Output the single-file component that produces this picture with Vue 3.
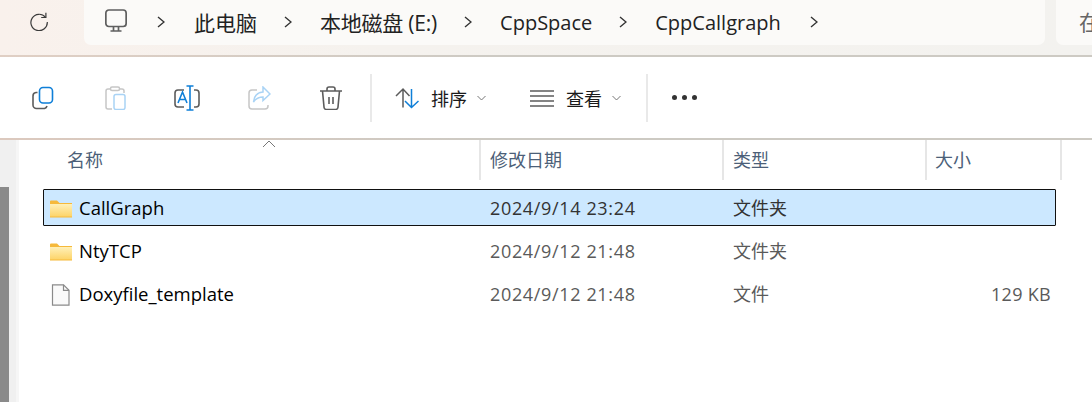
<template>
  <div class="explorer">
    <header class="topbar">
      <button class="refresh">
        <svg width="20" height="20" viewBox="0 0 20 20" fill="none" stroke="#3a3a3a" stroke-width="1.2">
          <path d="M16.4 6.2A8.2 8.2 0 1 0 18.3 11" />
          <path d="M16.9 1.8v4.700h-4.700" />
        </svg>
      </button>
      <nav class="address">
        <svg class="pc" width="24" height="24" viewBox="0 0 24 24" fill="none" stroke="#5f5f5f" stroke-width="1.7">
          <rect x="0.85" y="1" width="20.3" height="16.500" rx="3" />
          <path d="M8.500 18v3.500M13.500 18v3.500M5.500 22h11" />
        </svg>
        <template v-for="crumb in crumbs" :key="crumb.label">
          <svg class="chev" width="8" height="12" viewBox="0 0 8 12" fill="none" stroke="#333" stroke-width="1.4"><path d="M1 1l6 5-6 5" /></svg>
          <span class="crumb" :class="{ cjk: crumb.cjk }">{{ crumb.label }}</span>
        </template>
        <svg class="chev" width="8" height="12" viewBox="0 0 8 12" fill="none" stroke="#333" stroke-width="1.4"><path d="M1 1l6 5-6 5" /></svg>
      </nav>
      <div class="search">在</div>
    </header>

    <div class="toolbar">
      <div class="tool-group">
        <button class="tool">
          <svg width="24" height="24" viewBox="0 0 24 24" fill="none" stroke-width="1.6">
            <path d="M6.500 6.500H5A3.500 3.500 0 0 0 2 10v9a3.500 3.500 0 0 0 3.500 3.500h8A3.500 3.500 0 0 0 16 20" stroke="#5c5c5c" />
            <rect x="8.500" y="1.500" width="13" height="15.500" rx="3.500" stroke="#0f7fd8" />
          </svg>
        </button>
        <button class="tool">
          <svg width="24" height="24" viewBox="0 0 24 24" fill="none" stroke-width="1.5">
            <path d="M8 3H5a2 2 0 0 0-2 2v16a2 2 0 0 0 2 2h4M16 3h3a2 2 0 0 1 2 2v2" stroke="#c6c6c6" />
            <rect x="7.500" y="1" width="9" height="3.500" rx="1.500" stroke="#c6c6c6" />
            <rect x="11" y="8.500" width="11" height="15" rx="2" stroke="#a9d3f5" />
          </svg>
        </button>
        <button class="tool rename">
          <svg width="26" height="26" viewBox="0 0 26 26" fill="none" stroke-width="1.6">
            <path d="M10 5H4a3 3 0 0 0-3 3v11a3 3 0 0 0 3 3h6M20 5h2a3 3 0 0 1 3 3v11a3 3 0 0 1-3 3h-2" stroke="#5c5c5c" />
            <path d="M12.500 1h7M16 1v24M12.500 25h7" stroke="#0f7fd8" />
            <path d="M4 18l4.500-11 4.500 11M5.700 14.500h5.600" stroke="#0f7fd8" />
          </svg>
        </button>
        <button class="tool">
          <svg width="24" height="24" viewBox="0 0 24 24" fill="none" stroke-width="1.500">
            <path d="M10 4H5a3 3 0 0 0-3 3v13a3 3 0 0 0 3 3h13a3 3 0 0 0 3-3v-1" stroke="#c6c6c6" />
            <path d="M16 1l7 7-7 6.500V11c-5 0-7.500 2-9.500 5 .5-6 4-9.500 9.500-10z" stroke="#a9d3f5" />
          </svg>
        </button>
        <button class="tool">
          <svg width="24" height="24" viewBox="0 0 24 24" fill="none" stroke="#5c5c5c" stroke-width="1.600">
            <path d="M1 5h22M8 5V3a2 2 0 0 1 2-2h4a2 2 0 0 1 2 2v2" />
            <path d="M3.500 5l1.500 16a2.500 2.500 0 0 0 2.500 2.500h9A2.500 2.500 0 0 0 19 21l1.500-16" />
            <path d="M10 11v7M14 11v7" />
          </svg>
        </button>
      </div>
      <i class="sep"></i>
      <button class="menu sort-menu">
        <svg width="24" height="24" viewBox="0 0 24 24" fill="none" stroke-width="1.500">
          <path d="M8 21.500V3.500M1 10l7-7 6.500 7" stroke="#5c5c5c" />
          <path d="M16.500 3v18.500M10 15l6.500 6.500L23.500 15" stroke="#0f7fd8" />
        </svg>
        <span>排序</span>
        <svg class="caret" width="9" height="6" viewBox="0 0 9 6" fill="none" stroke="#777"><path d="M.5 1l4 4 4-4" /></svg>
      </button>
      <button class="menu view-menu">
        <svg width="24" height="24" viewBox="0 0 24 24" fill="none" stroke="#5c5c5c" stroke-width="1.300">
          <path d="M0 5h24M0 10h24M0 15h24M0 20h24" />
        </svg>
        <span>查看</span>
        <svg class="caret" width="9" height="6" viewBox="0 0 9 6" fill="none" stroke="#777"><path d="M.5 1l4 4 4-4" /></svg>
      </button>
      <i class="sep"></i>
      <button class="more"><b></b><b></b><b></b></button>
    </div>

    <div class="body">
      <aside class="side"><div class="thumb"></div></aside>
      <main class="files">
        <div class="head">
          <div class="hcell name-col">名称
            <svg class="sort-up" width="14" height="8" viewBox="0 0 14 8" fill="none" stroke="#777"><path d="M1 7l6-6 6 6" /></svg>
          </div>
          <div class="hcell">修改日期</div>
          <div class="hcell">类型</div>
          <div class="hcell">大小</div>
        </div>
        <div v-for="f in files" :key="f.name" class="row" :class="{ selected: f.selected }">
          <div class="name">
            <svg v-if="f.folder" class="icon" width="22" height="18" viewBox="0 0 22 18">
              <defs>
                <linearGradient :id="'fold-' + f.name" x1="0" y1="0" x2="0" y2="1">
                  <stop offset="0" stop-color="#fff0b8" />
                  <stop offset="1" stop-color="#fdd469" />
                </linearGradient>
              </defs>
              <path d="M0 1.500A1 1 0 0 1 1 .5h6l2.500 2.500H22v3H0z" fill="#f6b93b" />
              <rect x="0" y="3.500" width="22" height="14" fill="#f6b93b" />
              <rect x="0" y="4" width="22" height="12.500" :fill="'url(#fold-' + f.name + ')'" />
            </svg>
            <svg v-else class="icon" width="22" height="22" viewBox="0 0 22 22" fill="#fafafa" stroke="#8a8a8a" stroke-width="1.200">
              <path d="M2.500 .8h11l5.500 5.500v14.900H2.500z" />
              <path d="M13.500 .8v5.500h5.500" fill="none" />
            </svg>
            <span>{{ f.name }}</span>
          </div>
          <div class="cell date">{{ f.date }}</div>
          <div class="cell">{{ f.type }}</div>
          <div class="cell size">{{ f.size }}</div>
        </div>
      </main>
    </div>
  </div>
</template>

<script setup>
const crumbs = [
  { label: '此电脑', cjk: true },
  { label: '本地磁盘 (E:)', cjk: true },
  { label: 'CppSpace' },
  { label: 'CppCallgraph' },
]

const files = [
  { name: 'CallGraph', date: '2024/9/14 23:24', type: '文件夹', size: '', folder: true, selected: true },
  { name: 'NtyTCP', date: '2024/9/12 21:48', type: '文件夹', size: '', folder: true },
  { name: 'Doxyfile_template', date: '2024/9/12 21:48', type: '文件', size: '129 KB' },
]
</script>

<style>
html, body {
  margin: 0;
  background: #fff;
  overflow: hidden;
}
</style>

<style scoped>
.explorer {
  width: 1092px;
  height: 402px;
  overflow: hidden;
  font-family: "Open Sans", "Noto Sans CJK SC", sans-serif;
  display: flex;
  flex-direction: column;
  color: #1a1a1a;
}
button {
  border: 0;
  background: none;
  padding: 0;
  font: inherit;
  color: inherit;
  display: flex;
  align-items: center;
}
.topbar {
  height: 55px;
  flex: none;
  display: flex;
  align-items: flex-start;
  background: linear-gradient(90deg, #f9f1ec 0, #f5f2ee 35%, #f3f2ef 100%);
  border-bottom: 2px solid;
  border-image: linear-gradient(90deg, #e0cfc4, #cdcac3 45%) 1;
}
.refresh {
  width: 84px;
  height: 45px;
  justify-content: center;
  padding: 0 6px 3px 0;
  box-sizing: border-box;
}
.address {
  width: 961px;
  height: 45px;
  background: #fbfaf8;
  border-radius: 0 0 7px 7px;
  display: flex;
  align-items: center;
  padding: 0 0 1px 21px;
  box-sizing: border-box;
  font-size: 20px;
}
.pc {
  margin-right: 28px;
  margin-top: -3px;
}
.crumb {
  margin: 0 27px 0 28px;
  white-space: nowrap;
  color: #222;
}
.crumb.cjk {
  font-size: 21px;
}
.pc + .chev + .crumb {
  margin-left: 29px;
}
.cjk + .chev + .cjk {
  letter-spacing: -.22px;
}
.crumb:last-of-type {
  margin-right: 29px;
}
.search {
  margin-left: 11px;
  flex: 1;
  height: 45px;
  background: #fbfaf8;
  border-radius: 0 0 0 7px;
  padding-left: 23px;
  box-sizing: border-box;
  line-height: 44px;
  font-size: 21px;
  color: #666;
  white-space: nowrap;
  overflow: hidden;
}
.toolbar {
  height: 81px;
  flex: none;
  display: flex;
  align-items: center;
  border-bottom: 2px solid;
  border-image: linear-gradient(90deg, #dcc9be, #cdcac3 45%) 1;
  background: #fff;
  font-size: 18px;
}
.tool-group {
  display: flex;
  padding-left: 31px;
  gap: 48px;
  width: 370px;
  box-sizing: border-box;
}
.rename {
  margin: 0 -1px;
}
.sep {
  width: 2px;
  height: 48px;
  background: #e9e9e9;
}
.menu {
  gap: 12px;
}
.sort-menu {
  margin-left: 23px;
}
.view-menu {
  margin-left: 44px;
}
.caret {
  margin-left: -2px;
  margin-top: 1px;
}
.more {
  margin-left: 24px;
  gap: 5px;
}
.more b {
  width: 5px;
  height: 5px;
  border-radius: 50%;
  background: #333;
}
.view-menu + .sep {
  margin-left: 25px;
}
.body {
  flex: 1;
  display: flex;
  min-height: 0;
}
.side {
  width: 16px;
  background: #f0f0f0;
  border-right: 3px solid #f6f6f6;
  padding-top: 47px;
  display: flex;
  flex: none;
}
.thumb {
  width: 9px;
  background: #8a8a8a;
}
.files {
  flex: 1;
  padding-left: 24px;
}
.head,
.row {
  display: grid;
  grid-template-columns: 437px 243px 203px 130px;
  width: 1013px;
}
.head {
  height: 40px;
  font-size: 18px;
  color: #4c5f78;
  grid-template-columns: 437px 243px 203px 135px;
}
.hcell {
  position: relative;
  line-height: 40px;
  padding-left: 10px;
  border-right: 2px solid #e6e6e6;
  box-sizing: border-box;
  margin-right: -1px;
}
.hcell:last-child {
  padding-left: 9px;
}
.name-col {
  padding-left: 24px;
}
.sort-up {
  position: absolute;
  left: 219px;
  top: 0;
}
.row {
  height: 37px;
  margin-bottom: 6px;
  font-size: 18px;
  line-height: 37px;
  align-items: center;
  box-sizing: border-box;
  border: 1px solid transparent;
  white-space: nowrap;
}
.head + .row {
  margin-top: 9px;
}
.row.selected {
  background: #cce8ff;
  border-color: #111;
  border-radius: 1px;
}
.name {
  display: flex;
  align-items: center;
  color: #000;
  padding-left: 6px;
  font-size: 18.500px;
}
.name span {
  margin: -2px 0 0 7px;
}
.icon {
  flex: none;
}
.cell {
  padding-left: 9px;
  color: #5a5a5a;
}
.date {
  letter-spacing: .65px;
}
.selected .cell {
  color: #333;
}
.size {
  text-align: right;
  padding-right: 6px;
  letter-spacing: .3px;
}
</style>
